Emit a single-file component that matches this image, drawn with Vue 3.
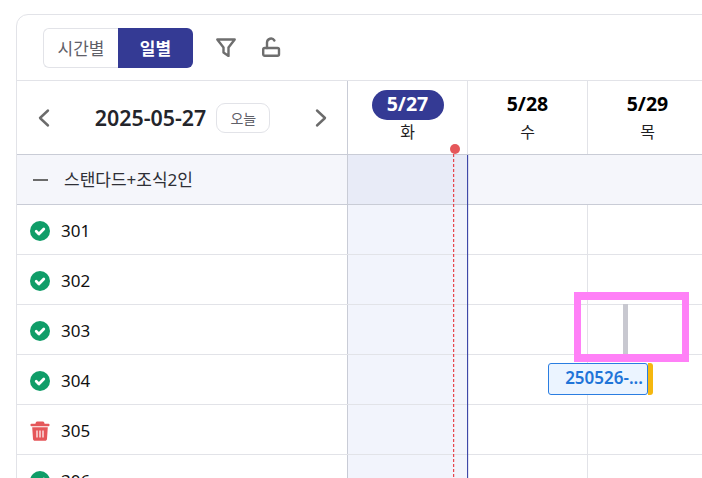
<script setup>
const days = [
  { date: "5/27", day: "화", today: true },
  { date: "5/28", day: "수" },
  { date: "5/29", day: "목" },
];

const rooms = [
  { no: "301", status: "ok" },
  { no: "302", status: "ok" },
  { no: "303", status: "ok" },
  { no: "304", status: "ok" },
  { no: "305", status: "trash" },
  { no: "306", status: "ok" },
];
</script>

<template>
  <div class="page">
    <div class="board">
      <div class="toolbar">
        <div class="switch">
          <button type="button" class="switch-btn">시간별</button>
          <button type="button" class="switch-btn active">일별</button>
        </div>
        <svg class="tool-icon" width="24" height="24" viewBox="0 0 24 24" fill="none" stroke="#6e6e6e" stroke-width="2.4" stroke-linejoin="round">
          <path d="M3.3 4.5h17.4l-6.2 8v8.4l-5-3.4v-5z" />
        </svg>
        <svg class="tool-icon" width="24" height="24" viewBox="0 0 24 24" fill="none" stroke="#6e6e6e" stroke-width="2.4" stroke-linecap="round" stroke-linejoin="round">
          <rect x="3.2" y="13" width="15.8" height="7.8" rx="1.5" />
          <path d="M7 13V7.5a4 4 0 0 1 7.4-2" />
        </svg>
      </div>

      <div class="head-row">
        <div class="date-nav">
          <svg width="16" height="20" viewBox="0 0 16 20" fill="none" stroke="#6b6b6b" stroke-width="2.4" stroke-linecap="round" stroke-linejoin="round">
            <path d="M12 2.5 4 10l8 7.5" />
          </svg>
          <div class="date-mid">
            <span class="date-text">2025-05-27</span>
            <button type="button" class="today-btn">오늘</button>
          </div>
          <svg width="16" height="20" viewBox="0 0 16 20" fill="none" stroke="#6b6b6b" stroke-width="2.4" stroke-linecap="round" stroke-linejoin="round">
            <path d="M4 2.5 12 10l-8 7.5" />
          </svg>
        </div>
        <div v-for="d in days" :key="d.date" class="day-head">
          <span class="day-date" :class="{ today: d.today }">{{ d.date }}</span>
          <span class="day-name">{{ d.day }}</span>
        </div>
      </div>

      <div class="group-row">
        <div class="label group-label">
          <span class="dash"></span>
          <span>스탠다드+조식2인</span>
        </div>
        <div class="cell group-cell today-col"></div>
        <div class="cell group-cell no-line"></div>
        <div class="cell group-cell no-line"></div>
      </div>

      <div v-for="r in rooms" :key="r.no" class="room-row">
        <div class="label">
          <svg v-if="r.status === 'ok'" width="20" height="20" viewBox="0 0 20 20">
            <circle cx="10" cy="10" r="10" fill="#0f9d68" />
            <path d="M6.2 10.3 8.9 12.9l4.9-5" fill="none" stroke="#fff" stroke-width="2.8" stroke-linecap="round" stroke-linejoin="round" />
          </svg>
          <svg v-else width="20" height="20" viewBox="0 0 20 20">
            <path fill="#e5575a" d="M7.2 0.4h5.6c.7 0 1.2.4 1.4 1l.4 1.3h4c.6 0 .9.4.9.9v.7c0 .5-.3.9-.9.9H1.4c-.6 0-.9-.4-.9-.9v-.7c0-.5.3-.9.9-.9h4l.4-1.3c.2-.6.7-1 1.4-1z" />
            <path fill="#e5575a" fill-rule="evenodd" d="M2.2 6.2h15.6l-.8 11.8c-.1 1-.9 1.8-1.9 1.8H4.9c-1 0-1.8-.8-1.9-1.8zM6.4 9.5v7h1.2v-7zm3 0v7h1.2v-7zm3 0v7h1.2v-7z" />
          </svg>
          <span class="room-no">{{ r.no }}</span>
        </div>
        <div class="cell today-col"></div>
        <div class="cell"></div>
        <div class="cell"></div>
      </div>

      <div class="now-dot"></div>
      <div class="now-line"></div>
      <div class="today-edge"></div>

      <div class="booking">
        <div class="booking-body">250526-...</div>
        <div class="booking-tail"></div>
      </div>

      <div class="marker">
        <div class="marker-bar"></div>
      </div>
    </div>
  </div>
</template>

<style scoped>
.page {
  width: 702px;
  height: 478px;
  overflow: hidden;
  background: #fff;
  padding: 14px 0 0 16px;
  box-sizing: border-box;
  font-family: "Noto Sans", "Noto Sans CJK KR", sans-serif;
  color: #1f1f24;
}

.board {
  position: relative;
  width: 700px;
  border: 1px solid #e2e3e8;
  border-radius: 12px 0 0 0;
  background: #fff;
}

.toolbar {
  height: 66px;
  display: flex;
  align-items: flex-start;
  padding: 13px 0 0 26px;
  border-bottom: 1px solid #e2e3e8;
  box-sizing: border-box;
}

.switch {
  display: flex;
  height: 40px;
  margin-right: 21px;
}

.switch-btn {
  width: 75px;
  padding: 0 0 2px;
  font: inherit;
  font-size: 17px;
  color: #5f6068;
  background: #fff;
  border: 1px solid #e2e3e8;
  border-right: none;
  border-radius: 6px 0 0 6px;
}

.switch-btn.active {
  color: #fff;
  font-weight: 700;
  background: #343a94;
  border: none;
  border-radius: 0 6px 6px 0;
}

.tool-icon {
  margin: 7px 22px 0 0;
}

.head-row {
  display: flex;
  height: 74px;
  box-sizing: border-box;
  border-bottom: 1px solid #c9ccd6;
}

.date-nav {
  width: 331px;
  box-sizing: border-box;
  display: flex;
  align-items: center;
  justify-content: space-between;
  padding: 0 18px 0 19px;
  border-right: 1px solid #c9ccd6;
}

.date-mid {
  display: flex;
  align-items: center;
  gap: 10px;
}

.date-text {
  font-size: 21.4px;
  font-weight: 600;
  color: #24252b;
}

.today-btn {
  width: 54px;
  height: 30px;
  padding: 0;
  font: inherit;
  font-size: 14px;
  color: #5f6068;
  background: #fff;
  border: 1px solid #e2e3e8;
  border-radius: 9px;
}

.day-head {
  width: 120px;
  box-sizing: border-box;
  display: flex;
  flex-direction: column;
  align-items: center;
  padding-top: 9px;
  border-right: 1px solid #e2e3e8;
}

.day-date {
  width: 72px;
  height: 30px;
  line-height: 28px;
  text-align: center;
  font-size: 19.5px;
  font-weight: 700;
  color: #000;
}

.day-date.today {
  color: #fff;
  background: #343a94;
  border-radius: 15px;
}

.day-name {
  font-size: 16px;
  line-height: 24px;
  color: #1f1f24;
}

.group-row,
.room-row {
  display: flex;
  height: 50px;
  box-sizing: border-box;
}

.group-row {
  background: #f5f6fb;
  border-bottom: 1px solid #c9ccd6;
}

.room-row {
  border-bottom: 1px solid #e2e3e8;
}

.label {
  width: 331px;
  box-sizing: border-box;
  display: flex;
  align-items: center;
  padding: 2px 0 0 13px;
  border-right: 1px solid #c9ccd6;
}

.group-label {
  padding: 0 0 2px 16px;
  font-size: 17px;
  color: #2e2f36;
}

.dash {
  width: 15px;
  height: 2px;
  margin: 2px 16px 0 0;
  background: #6b6b6b;
}

.room-no {
  margin-left: 11px;
  font-size: 17px;
  color: #111;
}

.cell {
  width: 120px;
  box-sizing: border-box;
  border-right: 1px solid #e2e3e8;
}

.no-line {
  border-right: none;
}

.group-cell.today-col {
  background: #e8ebf7;
}

.today-col {
  background: #f2f4fc;
}

.now-dot {
  position: absolute;
  left: 433px;
  top: 129px;
  width: 10px;
  height: 10px;
  border-radius: 50%;
  background: #e5575a;
}

/* two 1px columns so the dashes read as red and not grey */
.now-line {
  position: absolute;
  left: 436px;
  top: 139px;
  bottom: 0;
  width: 2px;
  background-image:
    repeating-linear-gradient(to bottom, rgba(229, 52, 60, 0.9) 0 3px, transparent 3px 5px),
    repeating-linear-gradient(to bottom, rgba(229, 52, 60, 0.2) 0 3px, transparent 3px 5px);
  background-size: 1px 100%;
  background-position: 0 0, 1px 0;
  background-repeat: no-repeat;
}

.today-edge {
  position: absolute;
  left: 450px;
  top: 140px;
  bottom: 0;
  width: 2px;
  background: linear-gradient(to right, #3f48a8 50%, rgba(63, 72, 168, 0.15) 50%);
}

.booking {
  position: absolute;
  left: 531px;
  top: 348px;
  display: flex;
  height: 32px;
}

.booking-body {
  width: 100px;
  box-sizing: border-box;
  text-align: right;
  padding-right: 4px;
  line-height: 28px;
  font-size: 17px;
  font-weight: 600;
  color: #1f74d8;
  background: #ebf4ff;
  border: 1px solid #2a7de1;
  border-radius: 3px;
}

.booking-tail {
  width: 5px;
  background: #f5b70f;
  border-radius: 0 3px 3px 0;
}

.marker {
  position: absolute;
  left: 557px;
  top: 277px;
  width: 115px;
  height: 70px;
  box-sizing: border-box;
  border: solid #ff80f7;
  border-width: 8px 7px;
}

.marker-bar {
  width: 5px;
  height: 50px;
  margin: 4px 0 0 42px;
  background: #c8c8d0;
}
</style>

<style>
html,
body {
  margin: 0;
  background: #fff;
}
</style>
